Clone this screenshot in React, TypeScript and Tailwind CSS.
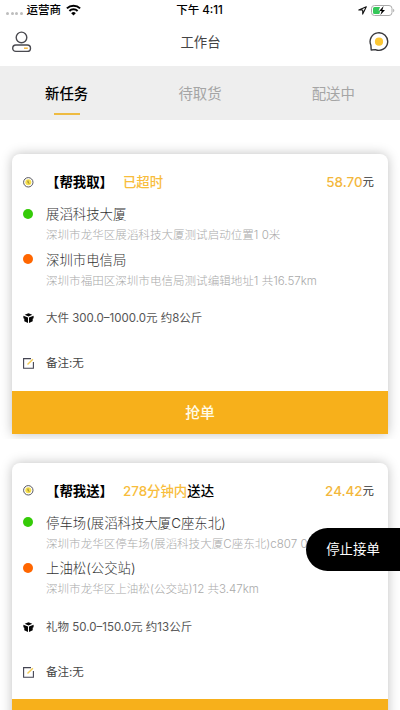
import type { ReactNode } from "react";

type Task = {
  kind: string;
  highlight: string;
  suffix?: string;
  price: string;
  from: { name: string; detail: string };
  to: { name: string; detail: string };
  goods: string;
};

const tasks: Task[] = [
  {
    kind: "【帮我取】",
    highlight: "已超时",
    price: "58.70",
    from: { name: "展滔科技大厦", detail: "深圳市龙华区展滔科技大厦测试启动位置1 0米" },
    to: { name: "深圳市电信局", detail: "深圳市福田区深圳市电信局测试编辑地址1 共16.57km" },
    goods: "大件 300.0–1000.0元 约8公斤",
  },
  {
    kind: "【帮我送】",
    highlight: "278分钟内",
    suffix: "送达",
    price: "24.42",
    from: { name: "停车场(展滔科技大厦C座东北)", detail: "深圳市龙华区停车场(展滔科技大厦C座东北)c807 0米" },
    to: { name: "上油松(公交站)", detail: "深圳市龙华区上油松(公交站)12 共3.47km" },
    goods: "礼物 50.0–150.0元 约13公斤",
  },
];

const StatusBar = () => (
  <div className="grid h-5 grid-cols-3 items-center pr-[5px] pl-[6px] text-[11.5px] leading-5 font-medium text-black">
    <div className="flex items-center">
      <div className="mt-[7px] flex gap-[1.5px]">
        <i className="size-[3px] rounded-full bg-[#bdbdbd]" />
        <i className="size-[3px] rounded-full bg-[#bdbdbd]" />
        <i className="size-[3px] rounded-full bg-[#bdbdbd]" />
        <i className="size-[3px] rounded-full bg-[#bdbdbd]" />
      </div>
      <span className="ml-[4px]">运营商</span>
      <svg className="ml-[5px]" width="15" height="12" viewBox="0 0 15 12" fill="none" stroke="#000" strokeWidth="2">
        <path d="M.9 4.4a9.4 9.4 0 0 1 13.2 0" />
        <path d="M3.4 7a5.9 5.9 0 0 1 8.2 0" />
        <path d="M7.5 11.6 5.2 9.2a3.3 3.3 0 0 1 4.6 0Z" fill="#000" stroke="none" />
      </svg>
    </div>
    <span className="pr-[2px] text-center whitespace-nowrap">下午 4:11</span>
    <div className="flex items-center justify-end">
      <svg width="9" height="9" viewBox="0 0 9 9" fill="none" stroke="#111" strokeWidth="1.1" strokeLinejoin="round">
        <path d="M8.3.7.8 4h3.9v4.1Z" />
      </svg>
      <svg className="ml-[4px]" width="24" height="11" viewBox="0 0 24 11">
        <rect x=".5" y=".5" width="20.5" height="10" rx="3" fill="#fff" stroke="#aaa" />
        <path d="M3.5 2H9L7.6 6h1.6L8.3 9H3.5A1.5 1.5 0 0 1 2 7.5v-4A1.5 1.5 0 0 1 3.5 2Z" fill="#35c759" />
        <path d="m12.6 1-4.4 5.1h2.5L9.4 10 14 4.9h-2.6Z" fill="#000" />
        <path d="M22.2 3.8v3.4c1.5-.5 1.5-2.9 0-3.4Z" fill="#aaa" />
      </svg>
    </div>
  </div>
);

const Header = () => (
  <header className="grid h-[46px] grid-cols-3 items-center pr-[11px] pb-[3px] pl-3">
    <svg width="20" height="22" viewBox="0 0 20 22" fill="none" stroke="#4a4a50" strokeWidth="1.4">
      <circle cx="9.5" cy="6.4" r="5.3" />
      <rect x=".7" y="14" width="17.8" height="6.4" rx="3.2" />
      <path d="M12 17.2h3.8" stroke="#f5b335" />
    </svg>
    <h1 className="pt-[2px] text-center text-[13.4px] text-[#444]">工作台</h1>
    <svg className="justify-self-end" width="20" height="20" viewBox="0 0 20 20" fill="none">
      <path
        d="M1.9 13.2A8.8 8.8 0 1 1 6.4 17.6L2.2 18Z"
        stroke="#38383c"
        strokeWidth="1.4"
        strokeLinejoin="round"
      />
      <circle cx="10" cy="9.7" r="4.1" fill="#fcc734" />
    </svg>
  </header>
);

const Tabs = () => (
  <nav className="grid h-[54px] grid-cols-3 bg-[#eee] pt-px text-center text-[14.4px] leading-[54px] text-[#a5a5a5]">
    <div className="relative font-medium text-black">
      新任务
      <span className="absolute bottom-[6px] left-1/2 h-[2px] w-[26px] -translate-x-1/2 bg-[#eebb42]" />
    </div>
    <div>待取货</div>
    <div>配送中</div>
  </nav>
);

const ClockIcon = () => (
  <svg width="11" height="11" viewBox="0 0 11 11" fill="none">
    <circle cx="5.3" cy="5.3" r="4.7" stroke="#45454d" strokeWidth=".9" />
    <circle cx="5.3" cy="5.3" r="3" fill="#f6de4b" />
    <path d="M5 3.6v2l1.4.8" stroke="#776b28" strokeWidth=".8" />
  </svg>
);

const BoxIcon = () => (
  <svg width="11" height="11" viewBox="0 0 11 11" fill="#050505">
    <path d="m5.5.3 3.8 1.5-3.8 1.6-3.8-1.6Z" />
    <path d="M.4 2.7 5 4.5v5.4L1.3 8.3V5.7L.4 5.2Z" />
    <path d="M10.6 2.7 6 4.5v5.4l3.7-1.6V5.7l.9-.5Z" />
  </svg>
);

const NoteIcon = () => (
  <svg width="11" height="11" viewBox="0 0 11 11" fill="none">
    <path d="M8 .6H.6v9.6h9.8V4" stroke="#444451" strokeWidth="1.1" />
    <path d="m4.5 6.5 5.4-5.3" stroke="#f2cb55" strokeWidth="1.4" />
  </svg>
);

const Row = ({ icon, className, children }: { icon: ReactNode; className: string; children: ReactNode }) => (
  <div className={`flex items-center whitespace-nowrap ${className}`}>
    <span className="flex w-[23px] shrink-0">{icon}</span>
    {children}
  </div>
);

const Stop = ({ color, name, detail }: { color: string; name: string; detail: string }) => (
  <div className="h-[45.3px] whitespace-nowrap">
    <Row
      className="h-[23px] text-[13.4px] font-light text-[#333]"
      icon={<i className={`size-[10px] rounded-full ${color}`} />}
    >
      <span className="pt-px">{name}</span>
    </Row>
    <p className="pl-[23px] text-[11.55px] leading-[21px] font-light text-[#aaa]">{detail}</p>
  </div>
);

const TaskCard = ({ task }: { task: Task }) => (
  <li className="overflow-hidden px-3 pt-[15px] pb-[5px]">
    <article className="overflow-hidden rounded-t-lg bg-white shadow-[0_0_12px_rgba(0,0,0,0.25)]">
      <div className="h-[236.6px] px-[11px] pt-[18.4px]">
        <Row className="h-5 text-[13.4px] font-medium text-black" icon={<ClockIcon />}>
          <span className="font-bold">{task.kind}</span>
          <span className="ml-[10px] text-[#f8bd3c]">{task.highlight}</span>
          <span>{task.suffix}</span>
          <span className="ml-auto text-[13.4px] text-[#f3b73c]">{task.price}</span>
          <span className="mr-[3px] pt-px text-[11.4px] font-normal text-[#333]">元</span>
        </Row>
        <div className="pt-[10px]">
          <Stop color="bg-[#35cb08]" {...task.from} />
          <Stop color="bg-[#ff6600]" {...task.to} />
        </div>
        <Row className="mt-[16px] h-5 text-[11.5px] text-[#555]" icon={<BoxIcon />}>
          {task.goods}
        </Row>
        <Row className="mt-[25px] h-5 text-[11.5px] text-[#444]" icon={<NoteIcon />}>
          备注:无
        </Row>
      </div>
      <button className="block h-[43px] w-full bg-[#f7b01b] pt-[2px] text-[14.8px] font-medium text-[#fffbe8]">
        抢单
      </button>
    </article>
  </li>
);

export default function App() {
  return (
    <div className="relative h-[710px] w-[400px] overflow-hidden bg-white font-['Inter','Noto_Sans_CJK_SC',sans-serif]">
      <StatusBar />
      <Header />
      <Tabs />
      <ul className="flex flex-col gap-[9px] pt-[19px]">
        {tasks.map((task) => (
          <TaskCard key={task.kind} task={task} />
        ))}
      </ul>
      <button className="absolute top-[528px] right-0 h-[43px] w-[94px] rounded-l-full bg-black text-[13.4px] text-white">
        停止接单
      </button>
    </div>
  );
}
